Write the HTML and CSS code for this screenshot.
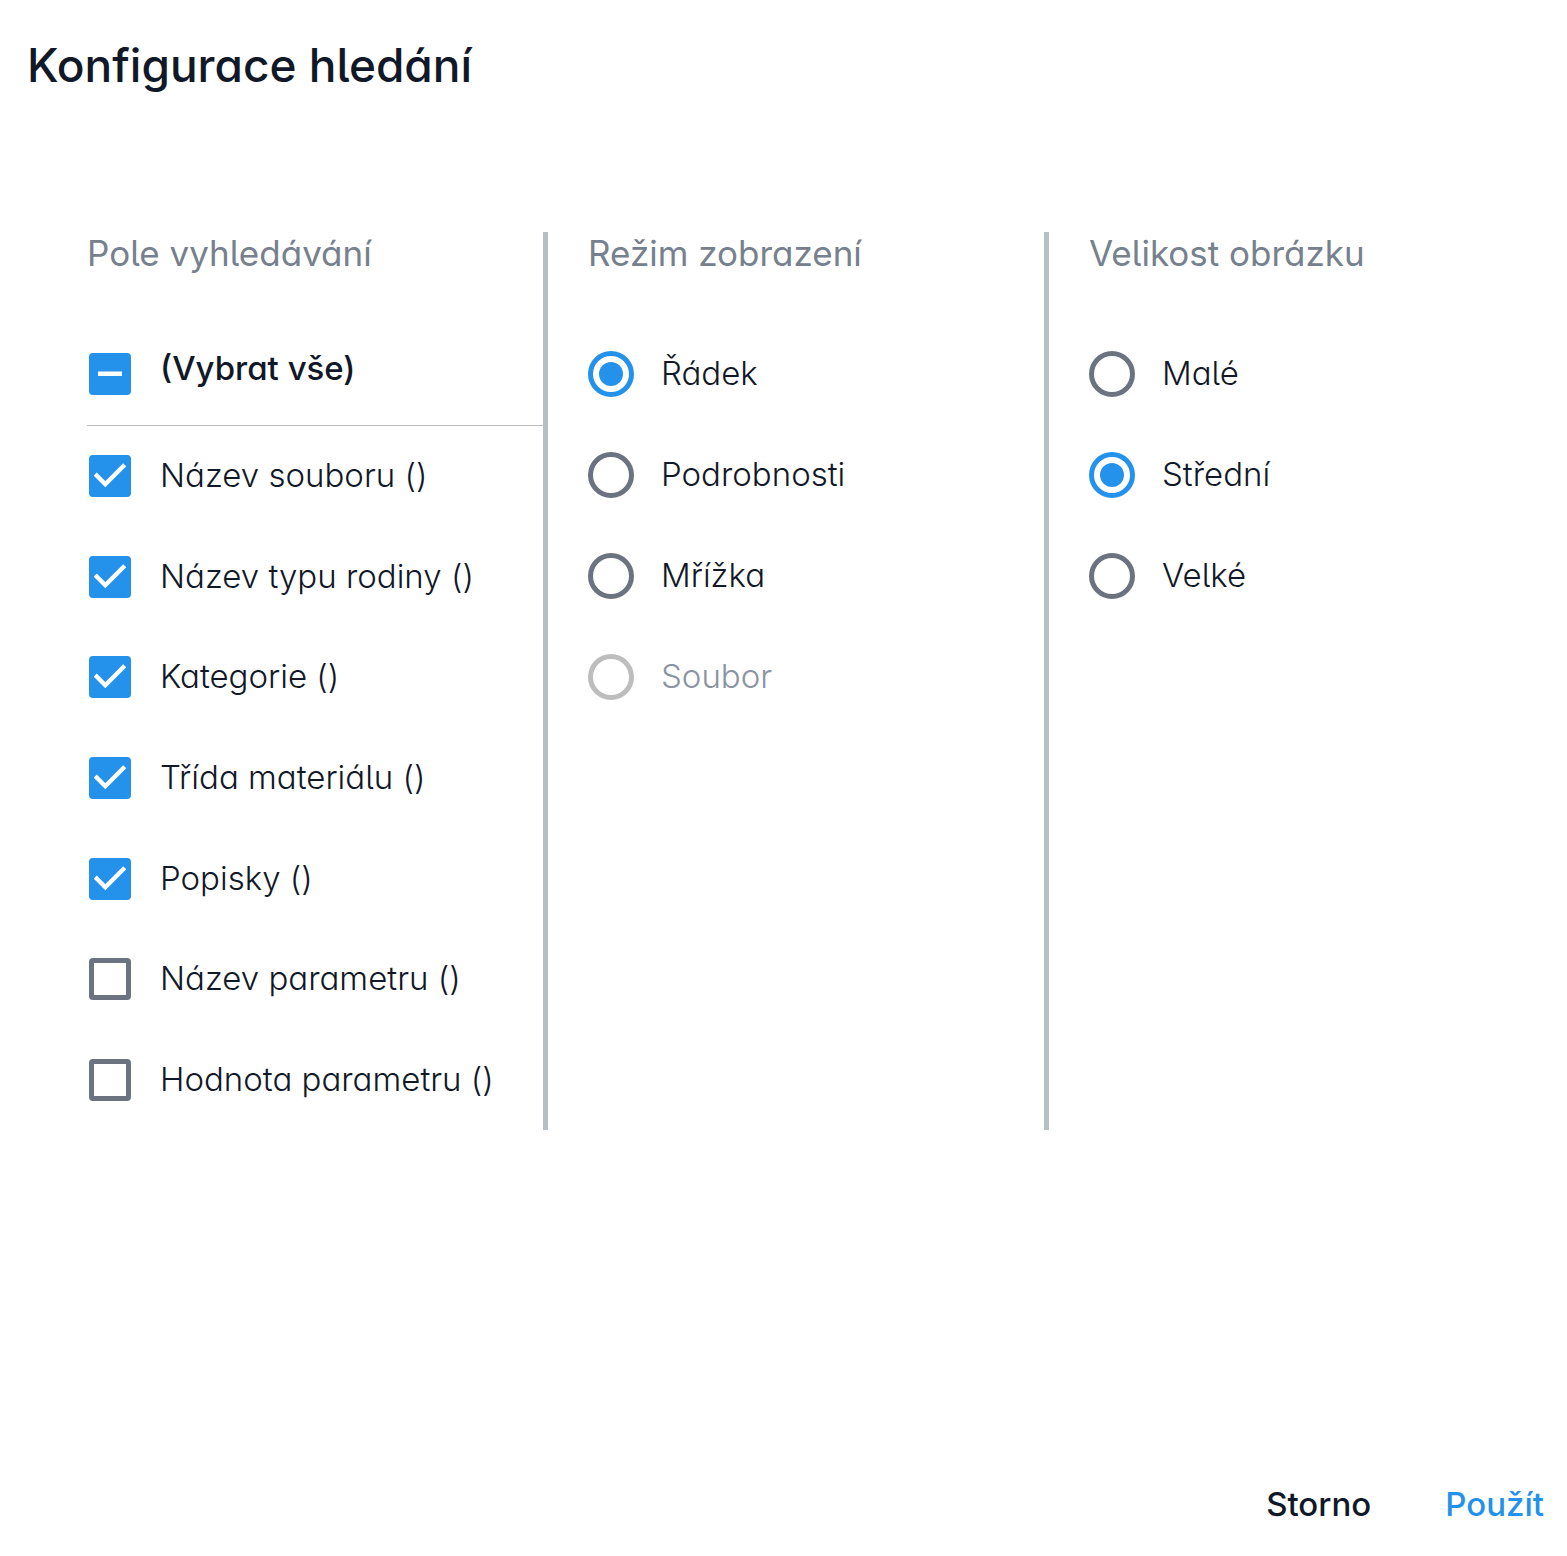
FILE: index.html
```html
<!DOCTYPE html>
<html lang="cs">
<head>
<meta charset="utf-8">
<meta name="viewport" content="width=device-width, initial-scale=1">
<title>Konfigurace hledání</title>
<link rel="stylesheet" href="styles.css">
</head>
<body>
<form class="dialog">
  <h1 class="title">Konfigurace hledání</h1>
  <div class="columns">
    <section class="column" aria-labelledby="fields-heading">
      <h2 class="heading" id="fields-heading">Pole vyhledávání</h2>
      <label class="option option-all"><input class="check check-mixed" type="checkbox" name="all"><span class="label-all">(Vybrat vše)</span></label>
      <div class="fields">
        <label class="option"><input class="check" type="checkbox" name="file" checked><span>Název souboru ()</span></label>
        <label class="option"><input class="check" type="checkbox" name="type" checked><span>Název typu rodiny ()</span></label>
        <label class="option"><input class="check" type="checkbox" name="category" checked><span>Kategorie ()</span></label>
        <label class="option"><input class="check" type="checkbox" name="material" checked><span>Třída materiálu ()</span></label>
        <label class="option"><input class="check" type="checkbox" name="tags" checked><span>Popisky ()</span></label>
        <label class="option"><input class="check" type="checkbox" name="param-name"><span>Název parametru ()</span></label>
        <label class="option"><input class="check" type="checkbox" name="param-value"><span>Hodnota parametru ()</span></label>
      </div>
    </section>
    <section class="column" aria-labelledby="view-heading">
      <h2 class="heading" id="view-heading">Režim zobrazení</h2>
      <label class="option"><input class="radio" type="radio" name="view" checked><span>Řádek</span></label>
      <label class="option"><input class="radio" type="radio" name="view"><span>Podrobnosti</span></label>
      <label class="option"><input class="radio" type="radio" name="view"><span>Mřížka</span></label>
      <label class="option option-disabled"><input class="radio" type="radio" name="view" disabled><span>Soubor</span></label>
    </section>
    <section class="column" aria-labelledby="size-heading">
      <h2 class="heading" id="size-heading">Velikost obrázku</h2>
      <label class="option"><input class="radio" type="radio" name="size"><span>Malé</span></label>
      <label class="option"><input class="radio" type="radio" name="size" checked><span>Střední</span></label>
      <label class="option"><input class="radio" type="radio" name="size"><span>Velké</span></label>
    </section>
  </div>
  <footer class="actions">
    <button class="button" type="button">Storno</button>
    <button class="button button-primary" type="submit">Použít</button>
  </footer>
</form>
</body>
</html>
```

FILE: styles.css
```css
* {
  box-sizing: border-box;
}

body {
  margin: 0;
  background: #fff;
  color: #111827;
  font-family: Inter, "Open Sans", sans-serif;
  font-size: 33px;
  line-height: 40px;
  font-feature-settings: "cv05", "cv11";
}

.dialog {
  display: flex;
  flex-direction: column;
  min-height: 100vh;
}

.title {
  margin: 0;
  padding: 35px 27px 0;
  font-size: 46px;
  line-height: 60px;
  font-weight: 500;
}

.columns {
  display: grid;
  grid-template-columns: repeat(3, 1fr);
  margin: 137px 17px 40px 47px;
}

.column {
  padding-left: 40px;
  border-right: 5px solid #b7bfc5;
}

.column:last-child {
  border-right-color: transparent;
}

.heading {
  margin: 0 0 49px;
  font-size: 35px;
  line-height: 42px;
  font-weight: 400;
  color: #77808d;
}

.option {
  display: flex;
  align-items: center;
  gap: 27px;
  height: 101px;
  font-weight: 300;
}

.option span {
  padding-bottom: 2px;
}

.option-all {
  height: 103px;
  border-bottom: 1px solid #bdbdbd;
}

.option .label-all {
  padding-bottom: 12px;
  font-weight: 500;
}

.option-disabled {
  color: #8b93a3;
}

.fields {
  display: grid;
  grid-auto-rows: 1fr;
  min-height: 704px;
}

.fields .option {
  height: auto;
}

.check,
.radio {
  flex: none;
  margin: 0;
  appearance: none;
  border: 5px solid #6b7280;
  background: center / 42px 42px no-repeat;
}

.check {
  width: 42px;
  height: 42px;
  margin: 0 2px;
  border-radius: 4px;
}

.check:checked,
.check-mixed {
  border-color: #2492eb;
  background-color: #2492eb;
  background-origin: border-box;
}

.check:checked {
  background-image: url("data:image/svg+xml,%3Csvg xmlns='http://www.w3.org/2000/svg' viewBox='0 0 42 42'%3E%3Cpath d='M6.2 19 16.3 29.2 35.7 9.8' fill='none' stroke='white' stroke-width='4.4'/%3E%3C/svg%3E");
}

.check-mixed {
  background-image: url("data:image/svg+xml,%3Csvg xmlns='http://www.w3.org/2000/svg' viewBox='0 0 42 42'%3E%3Cpath d='M9 20.8H33' fill='none' stroke='white' stroke-width='4.6'/%3E%3C/svg%3E");
}

.radio {
  display: grid;
  place-items: center;
  width: 46px;
  height: 46px;
  border-radius: 50%;
}

.radio:checked {
  border-color: #2492eb;
}

.radio:checked::before {
  content: "";
  width: 24px;
  height: 24px;
  border-radius: 50%;
  background: #2492eb;
}

.radio:disabled {
  border-color: #bdbdbd;
}

.actions {
  display: flex;
  justify-content: flex-end;
  gap: 74px;
  margin-top: auto;
  padding: 0 23px 32px;
}

.button {
  padding: 0;
  border: 0;
  background: none;
  color: inherit;
  font: inherit;
  font-feature-settings: inherit;
  font-weight: 500;
  cursor: pointer;
}

.button-primary {
  color: #2492eb;
}
```
